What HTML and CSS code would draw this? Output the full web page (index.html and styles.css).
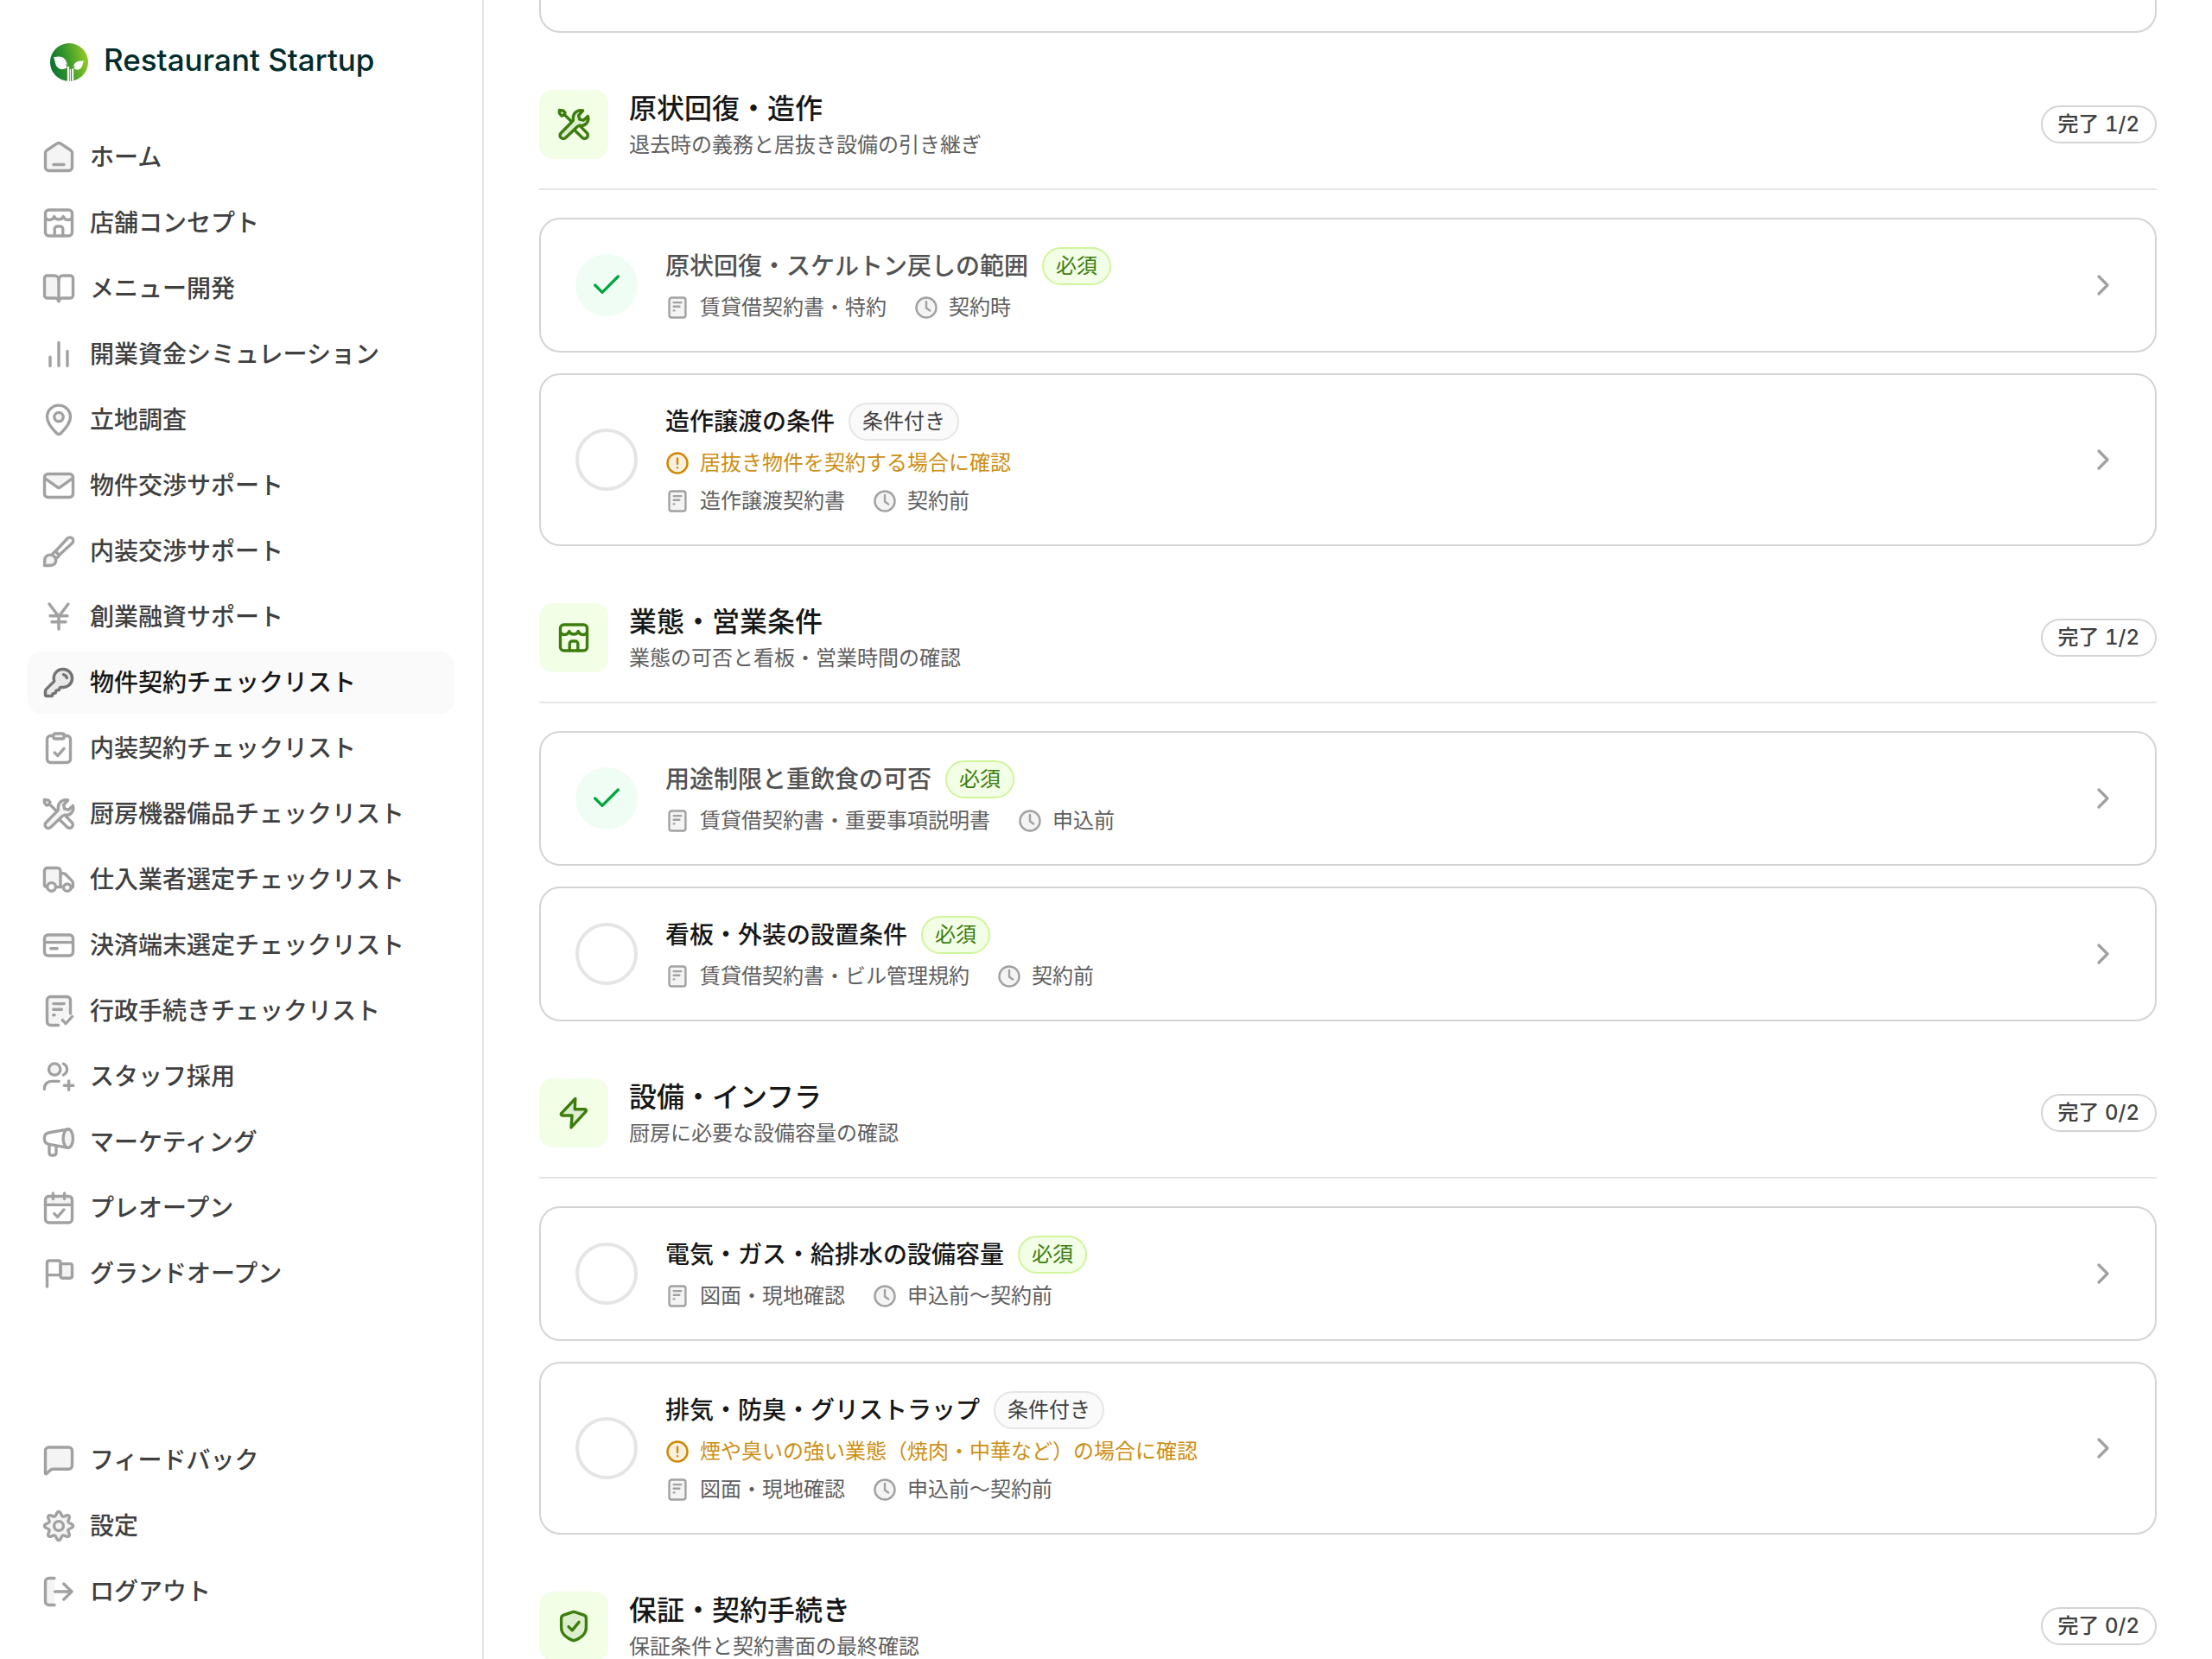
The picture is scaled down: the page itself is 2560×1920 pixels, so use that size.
FILE: index.html
```html
<!DOCTYPE html>
<html lang="ja">

<head>
    <meta charset="UTF-8">
    <meta name="viewport" content="width=device-width, initial-scale=1.0">
    <title>物件契約チェックリスト | Restaurant Startup</title>
    <link rel="stylesheet" href="styles.css">
</head>

<body>
    <!-- Icon set, 20px grid -->
    <svg class="sprite" aria-hidden="true">
        <symbol id="i-home" viewBox="0 0 20 20">
            <path class="tint" d="M2.25 7.6c0-.6.3-1.2.8-1.6l5.7-3.8a2.2 2.2 0 0 1 2.5 0L16.95 6c.5.4.8 1 .8 1.6v8.15a2 2 0 0 1-2 2H4.25a2 2 0 0 1-2-2z" />
            <path d="M7 14.25h6" />
        </symbol>
        <symbol id="i-shop" viewBox="0 0 20 20">
            <rect x="2.25" y="2.5" width="15.5" height="15" rx="2" />
            <path d="M2.5 7.2c.9 1.5 4 1.5 4.9-.9.8 2.3 4.4 2.3 5.2 0 .9 2.4 4 2.4 4.9.9" />
            <path d="M7.6 17.5v-4a1.5 1.5 0 0 1 1.5-1.5h1.8a1.5 1.5 0 0 1 1.5 1.5v4" />
        </symbol>
        <symbol id="i-book" viewBox="0 0 20 20">
            <path class="tint" d="M10 5c0-1.4-1.1-2.5-2.5-2.5H3.25c-.8 0-1.5.7-1.5 1.5v10c0 .8.7 1.5 1.5 1.5H8c1 0 1.6.6 2 1.8z" />
            <path d="M10 5c0-1.4 1.1-2.5 2.5-2.5h4.25c.8 0 1.5.7 1.5 1.5v10c0 .8-.7 1.5-1.5 1.5H12c-1 0-1.6.6-2 1.8" />
        </symbol>
        <symbol id="i-bars" viewBox="0 0 20 20">
            <path d="M5 11.6v5.15M10 3.25v13.5M15 8.25v8.5" />
        </symbol>
        <symbol id="i-pin" viewBox="0 0 20 20">
            <path d="M16.75 8.3c0 4.1-3.6 7.5-5.75 9.6a1.4 1.4 0 0 1-2 0C6.85 15.8 3.25 12.4 3.25 8.3a6.75 6.75 0 0 1 13.5 0z" />
            <circle class="tint" cx="10" cy="8.3" r="2.6" />
        </symbol>
        <symbol id="i-mail" viewBox="0 0 20 20">
            <path class="tint-only" d="M2 5.5 10 11.2l8-5.7-1.5-2.25h-13z" />
            <rect x="1.75" y="3.25" width="16.5" height="13.5" rx="2" />
            <path d="M2 5.8l7.2 5.1c.5.4 1.1.4 1.6 0L18 5.8" />
        </symbol>
        <symbol id="i-brush" viewBox="0 0 20 20">
            <path d="M8.1 10 15.1 2.5a1.9 1.9 0 0 1 2.7 2.7L10.2 12.3" />
            <path d="M8.1 10c-1 .4-1.5 1-1.9 2M10.2 12.3c-.4 1-1 1.6-2 2M8.1 10l2.1 2.3" />
            <path class="tint" d="M1.75 18.25c.2-.9 0-2.1.1-3.2.2-1.9 1.5-3 3.3-3 1.8 0 3.2 1.4 3.2 3.1 0 2.2-1.8 3.1-3.7 3.1z" />
        </symbol>
        <symbol id="i-yen" viewBox="0 0 20 20">
            <path d="M4.5 2.5 10 9.8l5.5-7.3M10 9.5v7.5M5 9.4h10M6 12.9h8" />
        </symbol>
        <symbol id="i-key" viewBox="0 0 20 20">
            <path class="tint" d="M12.5 2.25a5.25 5.25 0 1 1-1 10.4l-.9.3-.4 1.3-1.7.3-.4 1.5-1.6.4-.2 1c-.1.2-.3.3-.5.3H3a.75.75 0 0 1-.75-.75v-2.1c0-.4.2-.8.5-1.1L7.4 9.2a5.25 5.25 0 0 1 5.1-6.95z" />
            <path d="M12.8 5.4c1 .2 1.7.9 1.9 1.9" />
        </symbol>
        <symbol id="i-clipboard" viewBox="0 0 20 20">
            <path d="M6.9 2.75H5.25a2 2 0 0 0-2 2v11.5a2 2 0 0 0 2 2h9.5a2 2 0 0 0 2-2V4.75a2 2 0 0 0-2-2H13.1" />
            <rect class="tint" x="6.9" y="1.5" width="6.2" height="3" rx="1" />
            <path d="M7.6 12.5l1.8 1.8 3.6-4.1" />
        </symbol>
        <symbol id="i-tools" viewBox="0 0 20 20">
            <path class="tint" d="M1.7 1.7l2.4.4.9 1.2-.8 1.4-1.3.3-1.2-1.5z" />
            <path d="M4.5 4.3l4 3.8" />
            <path class="tint" d="M15.3 2c-2.9-.8-5.9 1.4-5.6 4.6.1.7-.1 1.3-.6 1.8L2.6 15a1.9 1.9 0 0 0 2.7 2.7l6.8-6.5c.5-.5 1.1-.6 1.8-.5 3.2.4 5.2-2.7 4.3-5.5l-2.6 2.4-2.2-.5-.6-2.3z" />
            <path d="M10.3 13.1l4.6 4.5a1.9 1.9 0 0 0 2.7-2.7l-4.2-4.2" />
        </symbol>
        <symbol id="i-truck" viewBox="0 0 20 20">
            <path class="tint" d="M3.3 14.4c-1-.1-1.6-.7-1.6-1.6V5c0-1 .8-1.75 1.75-1.75h5.8c1 0 1.75.8 1.75 1.75v9.3H8.3" />
            <path d="M11 6.4h1.5c.6 0 1.1.2 1.5.6l3.6 3.7c.4.4.6.9.6 1.4v1.7c0 .5-.4.9-.9.9M11 14.3h1.6" />
            <circle class="solid" cx="5.8" cy="14.2" r="2.4" />
            <circle class="solid" cx="14.9" cy="14.6" r="2.1" />
        </symbol>
        <symbol id="i-card" viewBox="0 0 20 20">
            <path class="tint-only" d="M1.75 4h16.5v4.3H1.75z" />
            <rect x="1.75" y="4" width="16.5" height="12" rx="2" />
            <path d="M1.75 8.3h16.5M5.4 11.9h3.7" />
        </symbol>
        <symbol id="i-doccheck" viewBox="0 0 20 20">
            <path class="tint" d="M9.8 18.25H5.25a2 2 0 0 1-2-2V3.75a2 2 0 0 1 2-2h9.5a2 2 0 0 1 2 2v7.75" />
            <path d="M6.9 5.8h6.2M6.9 9.1h4.8M6.9 12.4h.6M12.2 15.3l1.8 2 3.8-4.1" />
        </symbol>
        <symbol id="i-staff" viewBox="0 0 20 20">
            <circle class="tint" cx="7.6" cy="5.8" r="3.35" />
            <path d="M12.7 2.6a3.5 3.5 0 0 1 0 6.4M1.7 17.3v-.6a4 4 0 0 1 4-4h4.4M15.8 12.5v5.2M13.2 15.1h5.2" />
        </symbol>
        <symbol id="i-megaphone" viewBox="0 0 20 20">
            <ellipse class="tint" cx="15.4" cy="7.8" rx="2.85" ry="5.4" />
            <path d="M15.4 2.4 4 4.5C2.5 4.8 1.7 5.9 1.7 7.8s.8 3 2.3 3.3l11.4 2.1M4.5 11.3v4.7c0 .9.6 1.5 1.5 1.5h1c.9 0 1.5-.6 1.5-1.5v-4" />
        </symbol>
        <symbol id="i-calendar" viewBox="0 0 20 20">
            <path class="tint-only" d="M2.25 3.25h15.5v5H2.25z" />
            <rect x="2.25" y="3.25" width="15.5" height="15.25" rx="2" />
            <path d="M2.25 8.2h15.5M6.7 1.5v3.3M13.3 1.5v3.3M7.4 13.3l1.9 1.9 3.7-4.2" />
        </symbol>
        <symbol id="i-flag" viewBox="0 0 20 20">
            <path d="M3.25 17.5V3.75c0-.7.5-1.25 1.25-1.25h5.25c.7 0 1.25.5 1.25 1.25v7.05H3.25" />
            <path class="tint" d="M11 4.3h5.5c.7 0 1.25.5 1.25 1.2v5.9c0 .7-.5 1.2-1.25 1.2h-4.25c-.7 0-1.25-.5-1.25-1.2z" />
        </symbol>
        <symbol id="i-chat" viewBox="0 0 20 20">
            <path class="tint" d="M2.25 17.6V4.5a2 2 0 0 1 2-2h11.5a2 2 0 0 1 2 2v8.6a2 2 0 0 1-2 2H6.6c-.5 0-.9.2-1.2.4l-2.5 2.3c-.3.2-.65 0-.65-.2z" />
        </symbol>
        <symbol id="i-gear" viewBox="0 0 20 20">
            <path class="tint" d="M18.3 10C18.3 11.5 16 11.2 15.5 12.3C15.1 13.4 16.9 14.8 15.9 15.9C14.8 16.9 13.4 15.1 12.3 15.5C11.2 16 11.5 18.3 10 18.3C8.5 18.3 8.8 16 7.7 15.5C6.6 15.1 5.2 16.9 4.1 15.9C3.1 14.8 4.9 13.4 4.5 12.3C4 11.2 1.7 11.5 1.7 10C1.7 8.5 4 8.8 4.5 7.7C4.9 6.6 3.1 5.2 4.1 4.1C5.2 3.1 6.6 4.9 7.7 4.5C8.8 4 8.5 1.7 10 1.7C11.5 1.7 11.2 4 12.3 4.5C13.4 4.9 14.8 3.1 15.9 4.1C16.9 5.2 15.1 6.6 15.5 7.7C16 8.8 18.3 8.5 18.3 10Z" />
            <circle cx="10" cy="10" r="2.7" />
        </symbol>
        <symbol id="i-logout" viewBox="0 0 20 20">
            <path class="tint" d="M7.5 2.25H4.25a2 2 0 0 0-2 2v11.5a2 2 0 0 0 2 2H7.5" />
            <path d="M7.8 10h9.6M12.9 5.5l4.6 4.5-4.6 4.5" />
        </symbol>
        <symbol id="i-bolt" viewBox="0 0 20 20">
            <path class="tint" d="M10.9 1.75 2.9 10.2c-.5.6-.1 1.3.6 1.3H9l-.5 6.9 8.5-9.2c.5-.6.1-1.3-.6-1.3H10.6z" />
        </symbol>
        <symbol id="i-shield" viewBox="0 0 20 20">
            <path class="tint" d="M9.4 1.85a2 2 0 0 1 1.2 0l5.2 1.7c.8.3 1.4 1 1.4 1.9v5.4c0 3.9-3.8 6.3-6.5 7.3a2 2 0 0 1-1.4 0c-2.7-1-6.5-3.4-6.5-7.3V5.45c0-.9.6-1.6 1.4-1.9z" />
            <path d="M7 10.3l2.1 2.1 3.9-4.7" />
        </symbol>
        <symbol id="i-doc" viewBox="0 0 20 20">
            <rect class="tint" x="3.25" y="1.75" width="13.5" height="16.5" rx="2" />
            <path d="M6.9 5.8h6.2M6.9 9.1h4.8M6.9 12.4h.6" />
        </symbol>
        <symbol id="i-clock" viewBox="0 0 20 20">
            <circle class="tint" cx="10" cy="10" r="8.25" />
            <path d="M10 5v5.3l3 2.2" />
        </symbol>
        <symbol id="i-alert" viewBox="0 0 20 20">
            <circle class="tint" cx="10" cy="10" r="8.25" />
            <path d="M10 6v4.5M10 13.7v.1" />
        </symbol>
        <symbol id="i-chevron" viewBox="0 0 24 24">
            <path d="M9 18l6-6-6-6" />
        </symbol>
        <symbol id="i-check" viewBox="0 0 24 24">
            <path d="M20 6 9 17l-5-5" />
        </symbol>
    </svg>

    <div class="layout">
        <aside class="sidebar">
            <a class="brand" href="#">
                <svg class="brand-mark" viewBox="0 0 44 44" aria-hidden="true">
                    <defs>
                        <linearGradient id="leaf" x1="0" y1="0.6" x2="1" y2="0.4">
                            <stop offset="0" stop-color="#04702f" />
                            <stop offset="0.5" stop-color="#3f9c2c" />
                            <stop offset="1" stop-color="#95cb27" />
                        </linearGradient>
                    </defs>
                    <circle cx="22" cy="22" r="22" fill="url(#leaf)" />
                    <path fill="#fff" d="M4 16.2c4.5-.6 9.5-1.6 13 2.3 2 2.3 2.5 4.8 2.9 7.8-.9-1.3-1.9-2.3-3.4-3 1.5 1.4 2.5 3 3 5-3.5 2.6-8.5 2.6-11.5-1C5.5 24.2 6 20 4 16.2zM39.5 20.5c-4-.3-8.5-.2-11 3-.9 1.3-1.2 2.6-1.3 4.3.8-1 1.8-1.7 3-2.2-1.3 1-2.3 2.3-2.6 4 2.7 1.8 6.5 1.5 8.6-1.3 1.7-2.4 1.3-5.5 3.3-7.8zM19.9 27h2.3v17h-2.3zM25.2 29.5h2v14h-2zM22.9 30h1v14h-1z" />
                </svg>
                <span class="brand-name">Restaurant Startup</span>
            </a>

            <nav class="nav">
                <a class="nav-item" href="#"><svg class="icon"><use href="#i-home" /></svg>ホーム</a>
                <a class="nav-item" href="#"><svg class="icon"><use href="#i-shop" /></svg>店舗コンセプト</a>
                <a class="nav-item" href="#"><svg class="icon"><use href="#i-book" /></svg>メニュー開発</a>
                <a class="nav-item" href="#"><svg class="icon"><use href="#i-bars" /></svg>開業資金シミュレーション</a>
                <a class="nav-item" href="#"><svg class="icon"><use href="#i-pin" /></svg>立地調査</a>
                <a class="nav-item" href="#"><svg class="icon"><use href="#i-mail" /></svg>物件交渉サポート</a>
                <a class="nav-item" href="#"><svg class="icon"><use href="#i-brush" /></svg>内装交渉サポート</a>
                <a class="nav-item" href="#"><svg class="icon"><use href="#i-yen" /></svg>創業融資サポート</a>
                <a class="nav-item active" href="#" aria-current="page"><svg class="icon"><use href="#i-key" /></svg>物件契約チェックリスト</a>
                <a class="nav-item" href="#"><svg class="icon"><use href="#i-clipboard" /></svg>内装契約チェックリスト</a>
                <a class="nav-item" href="#"><svg class="icon"><use href="#i-tools" /></svg>厨房機器備品チェックリスト</a>
                <a class="nav-item" href="#"><svg class="icon"><use href="#i-truck" /></svg>仕入業者選定チェックリスト</a>
                <a class="nav-item" href="#"><svg class="icon"><use href="#i-card" /></svg>決済端末選定チェックリスト</a>
                <a class="nav-item" href="#"><svg class="icon"><use href="#i-doccheck" /></svg>行政手続きチェックリスト</a>
                <a class="nav-item" href="#"><svg class="icon"><use href="#i-staff" /></svg>スタッフ採用</a>
                <a class="nav-item" href="#"><svg class="icon"><use href="#i-megaphone" /></svg>マーケティング</a>
                <a class="nav-item" href="#"><svg class="icon"><use href="#i-calendar" /></svg>プレオープン</a>
                <a class="nav-item" href="#"><svg class="icon"><use href="#i-flag" /></svg>グランドオープン</a>
            </nav>

            <nav class="nav nav-bottom">
                <a class="nav-item" href="#"><svg class="icon"><use href="#i-chat" /></svg>フィードバック</a>
                <a class="nav-item" href="#"><svg class="icon"><use href="#i-gear" /></svg>設定</a>
                <a class="nav-item" href="#"><svg class="icon"><use href="#i-logout" /></svg>ログアウト</a>
            </nav>
        </aside>

        <main class="main">
            <!-- end of the previous section -->
            <div class="card card-tail"></div>

            <section class="section">
                <header class="section-header">
                    <span class="section-icon"><svg class="icon"><use href="#i-tools" /></svg></span>
                    <div class="section-text">
                        <h2>原状回復・造作</h2>
                        <p>退去時の義務と居抜き設備の引き継ぎ</p>
                    </div>
                    <span class="progress">完了 1/2</span>
                </header>
                <div class="cards">
                    <article class="card done">
                        <span class="toggle">
                            <input type="checkbox" id="item-1" checked>
                            <svg class="icon"><use href="#i-check" /></svg>
                        </span>
                        <div class="card-body">
                            <div class="card-title">
                                <label for="item-1">原状回復・スケルトン戻しの範囲</label>
                                <span class="badge required">必須</span>
                            </div>
                            <div class="meta">
                                <span class="meta-item"><svg class="icon"><use href="#i-doc" /></svg>賃貸借契約書・特約</span>
                                <span class="meta-item"><svg class="icon"><use href="#i-clock" /></svg>契約時</span>
                            </div>
                        </div>
                        <a class="open" href="#" aria-label="詳細"><svg class="icon"><use href="#i-chevron" /></svg></a>
                    </article>
                    <article class="card">
                        <span class="toggle">
                            <input type="checkbox" id="item-2">
                            <svg class="icon"><use href="#i-check" /></svg>
                        </span>
                        <div class="card-body">
                            <div class="card-title">
                                <label for="item-2">造作譲渡の条件</label>
                                <span class="badge">条件付き</span>
                            </div>
                            <p class="note"><svg class="icon"><use href="#i-alert" /></svg>居抜き物件を契約する場合に確認</p>
                            <div class="meta">
                                <span class="meta-item"><svg class="icon"><use href="#i-doc" /></svg>造作譲渡契約書</span>
                                <span class="meta-item"><svg class="icon"><use href="#i-clock" /></svg>契約前</span>
                            </div>
                        </div>
                        <a class="open" href="#" aria-label="詳細"><svg class="icon"><use href="#i-chevron" /></svg></a>
                    </article>
                </div>
            </section>

            <section class="section">
                <header class="section-header">
                    <span class="section-icon"><svg class="icon"><use href="#i-shop" /></svg></span>
                    <div class="section-text">
                        <h2>業態・営業条件</h2>
                        <p>業態の可否と看板・営業時間の確認</p>
                    </div>
                    <span class="progress">完了 1/2</span>
                </header>
                <div class="cards">
                    <article class="card done">
                        <span class="toggle">
                            <input type="checkbox" id="item-3" checked>
                            <svg class="icon"><use href="#i-check" /></svg>
                        </span>
                        <div class="card-body">
                            <div class="card-title">
                                <label for="item-3">用途制限と重飲食の可否</label>
                                <span class="badge required">必須</span>
                            </div>
                            <div class="meta">
                                <span class="meta-item"><svg class="icon"><use href="#i-doc" /></svg>賃貸借契約書・重要事項説明書</span>
                                <span class="meta-item"><svg class="icon"><use href="#i-clock" /></svg>申込前</span>
                            </div>
                        </div>
                        <a class="open" href="#" aria-label="詳細"><svg class="icon"><use href="#i-chevron" /></svg></a>
                    </article>
                    <article class="card">
                        <span class="toggle">
                            <input type="checkbox" id="item-4">
                            <svg class="icon"><use href="#i-check" /></svg>
                        </span>
                        <div class="card-body">
                            <div class="card-title">
                                <label for="item-4">看板・外装の設置条件</label>
                                <span class="badge required">必須</span>
                            </div>
                            <div class="meta">
                                <span class="meta-item"><svg class="icon"><use href="#i-doc" /></svg>賃貸借契約書・ビル管理規約</span>
                                <span class="meta-item"><svg class="icon"><use href="#i-clock" /></svg>契約前</span>
                            </div>
                        </div>
                        <a class="open" href="#" aria-label="詳細"><svg class="icon"><use href="#i-chevron" /></svg></a>
                    </article>
                </div>
            </section>

            <section class="section">
                <header class="section-header">
                    <span class="section-icon"><svg class="icon"><use href="#i-bolt" /></svg></span>
                    <div class="section-text">
                        <h2>設備・インフラ</h2>
                        <p>厨房に必要な設備容量の確認</p>
                    </div>
                    <span class="progress">完了 0/2</span>
                </header>
                <div class="cards">
                    <article class="card">
                        <span class="toggle">
                            <input type="checkbox" id="item-5">
                            <svg class="icon"><use href="#i-check" /></svg>
                        </span>
                        <div class="card-body">
                            <div class="card-title">
                                <label for="item-5">電気・ガス・給排水の設備容量</label>
                                <span class="badge required">必須</span>
                            </div>
                            <div class="meta">
                                <span class="meta-item"><svg class="icon"><use href="#i-doc" /></svg>図面・現地確認</span>
                                <span class="meta-item"><svg class="icon"><use href="#i-clock" /></svg>申込前〜契約前</span>
                            </div>
                        </div>
                        <a class="open" href="#" aria-label="詳細"><svg class="icon"><use href="#i-chevron" /></svg></a>
                    </article>
                    <article class="card">
                        <span class="toggle">
                            <input type="checkbox" id="item-6">
                            <svg class="icon"><use href="#i-check" /></svg>
                        </span>
                        <div class="card-body">
                            <div class="card-title">
                                <label for="item-6">排気・防臭・グリストラップ</label>
                                <span class="badge">条件付き</span>
                            </div>
                            <p class="note"><svg class="icon"><use href="#i-alert" /></svg>煙や臭いの強い業態（焼肉・中華など）の場合に確認</p>
                            <div class="meta">
                                <span class="meta-item"><svg class="icon"><use href="#i-doc" /></svg>図面・現地確認</span>
                                <span class="meta-item"><svg class="icon"><use href="#i-clock" /></svg>申込前〜契約前</span>
                            </div>
                        </div>
                        <a class="open" href="#" aria-label="詳細"><svg class="icon"><use href="#i-chevron" /></svg></a>
                    </article>
                </div>
            </section>

            <section class="section">
                <header class="section-header">
                    <span class="section-icon"><svg class="icon"><use href="#i-shield" /></svg></span>
                    <div class="section-text">
                        <h2>保証・契約手続き</h2>
                        <p>保証条件と契約書面の最終確認</p>
                    </div>
                    <span class="progress">完了 0/2</span>
                </header>
            </section>
        </main>
    </div>
</body>

</html>
```

FILE: styles.css
```css
:root {
    --text: #171717;
    --text-nav: #404040;
    --text-muted: #5f5f5f;
    --icon: #a1a1a1;
    --border: #d4d4d4;
    --border-light: #e5e5e5;
    --green-bg: #f3fee7;
    --green-border: #d0f59b;
    --green-text: #3c7d0e;
    --warning: #cc8f14;
}

* {
    box-sizing: border-box;
}

body {
    margin: 0;
    font-family: Inter, "Noto Sans CJK JP", sans-serif;
    font-size: 24px;
    line-height: 36px;
    color: var(--text);
    background-color: #fff;
}

h2,
p {
    margin: 0;
}

a {
    color: inherit;
    text-decoration: none;
}

.sprite {
    display: none;
}

.icon {
    flex: none;
    width: 40px;
    height: 40px;
    fill: none;
    stroke: currentColor;
    stroke-width: 1.7;
    stroke-linecap: round;
    stroke-linejoin: round;
}

.tint {
    fill: currentColor;
    fill-opacity: 0.12;
}

.tint-only {
    fill: currentColor;
    fill-opacity: 0.12;
    stroke: none;
}

.solid {
    fill: #fff;
}

.layout {
    display: flex;
    height: 100vh;
    overflow: hidden;
}

/* Sidebar */
.sidebar {
    display: flex;
    flex-direction: column;
    flex: none;
    width: 560px;
    padding: 48px 32px 42px;
    border-right: 2px solid var(--border-light);
}

.brand {
    display: flex;
    align-items: center;
    gap: 18px;
    height: 48px;
    margin-bottom: 50px;
    padding-left: 26px;
}

.brand-mark {
    width: 44px;
    height: 44px;
}

.brand-name {
    padding-bottom: 6px;
    font-size: 35px;
    font-weight: 500;
    color: #022c2b;
}

.nav {
    display: flex;
    flex-direction: column;
    gap: 4px;
}

.nav-bottom {
    margin-top: auto;
}

.nav-item {
    display: flex;
    align-items: center;
    gap: 16px;
    height: 72px;
    padding: 0 16px;
    border-radius: 16px;
    font-size: 28px;
    font-weight: 500;
    color: var(--text-nav);
}

.nav-item .icon {
    color: var(--icon);
}

.nav-item.active {
    background-color: #fafafa;
    color: var(--text);
}

.nav-item.active .icon {
    color: #737373;
}

/* Checklist */
.main {
    flex: 1;
    min-width: 0;
    padding: 0 64px;
}

.section {
    margin-top: 64px;
}

.section-header {
    display: flex;
    align-items: center;
    gap: 24px;
    padding-bottom: 32px;
    border-bottom: 2px solid var(--border-light);
}

.section-icon {
    display: grid;
    place-items: center;
    width: 80px;
    height: 80px;
    border-radius: 16px;
    background-color: var(--green-bg);
    color: var(--green-text);
}

.section-text {
    flex: 1;
}

.section-text h2 {
    font-size: 32px;
    line-height: 48px;
    font-weight: 500;
}

.section-text p {
    color: var(--text-muted);
}

.progress {
    padding: 2px 18px;
    border: 2px solid var(--border);
    border-radius: 22px;
    font-weight: 500;
    font-variant-numeric: tabular-nums;
    color: var(--text-nav);
}

.cards {
    display: flex;
    flex-direction: column;
    gap: 24px;
    margin-top: 32px;
}

.card {
    display: flex;
    align-items: center;
    gap: 32px;
    padding: 32px 40px;
    border: 2px solid var(--border);
    border-radius: 24px;
}

.card-tail {
    height: 38px;
    padding: 0;
    border-top: 0;
    border-radius: 0 0 24px 24px;
}

.toggle {
    display: grid;
    place-items: center;
}

.toggle input,
.toggle .icon {
    grid-area: 1 / 1;
}

.toggle input {
    appearance: none;
    width: 72px;
    height: 72px;
    margin: 0;
    border: 4px solid var(--border-light);
    border-radius: 50%;
}

.toggle input:checked {
    border: 0;
    background-color: #f0fdf4;
}

.toggle .icon {
    visibility: hidden;
    stroke-width: 2;
    color: #00a63e;
    pointer-events: none;
}

.toggle input:checked + .icon {
    visibility: visible;
}

.card-body {
    display: flex;
    flex: 1;
    flex-direction: column;
    gap: 8px;
}

.card-title {
    display: flex;
    align-items: center;
    gap: 16px;
    font-size: 28px;
    font-weight: 500;
}

.done .card-title label {
    color: #525252;
}

.badge {
    padding: 2px 14px;
    border: 2px solid var(--border-light);
    border-radius: 22px;
    background-color: #fafafa;
    font-size: 24px;
    font-weight: 400;
    color: var(--text-nav);
}

.badge.required {
    border-color: var(--green-border);
    background-color: var(--green-bg);
    color: var(--green-text);
}

.note,
.meta-item {
    display: flex;
    align-items: center;
    gap: 12px;
}

.note {
    color: var(--warning);
}

.note .icon {
    color: #d08700;
}

.meta {
    display: flex;
    gap: 32px;
    color: var(--text-muted);
}

.note .icon,
.meta .icon {
    width: 28px;
    height: 28px;
}

.meta .icon {
    color: var(--icon);
}

.open {
    display: flex;
    color: var(--icon);
}

.open .icon {
    stroke-width: 2;
}
```
